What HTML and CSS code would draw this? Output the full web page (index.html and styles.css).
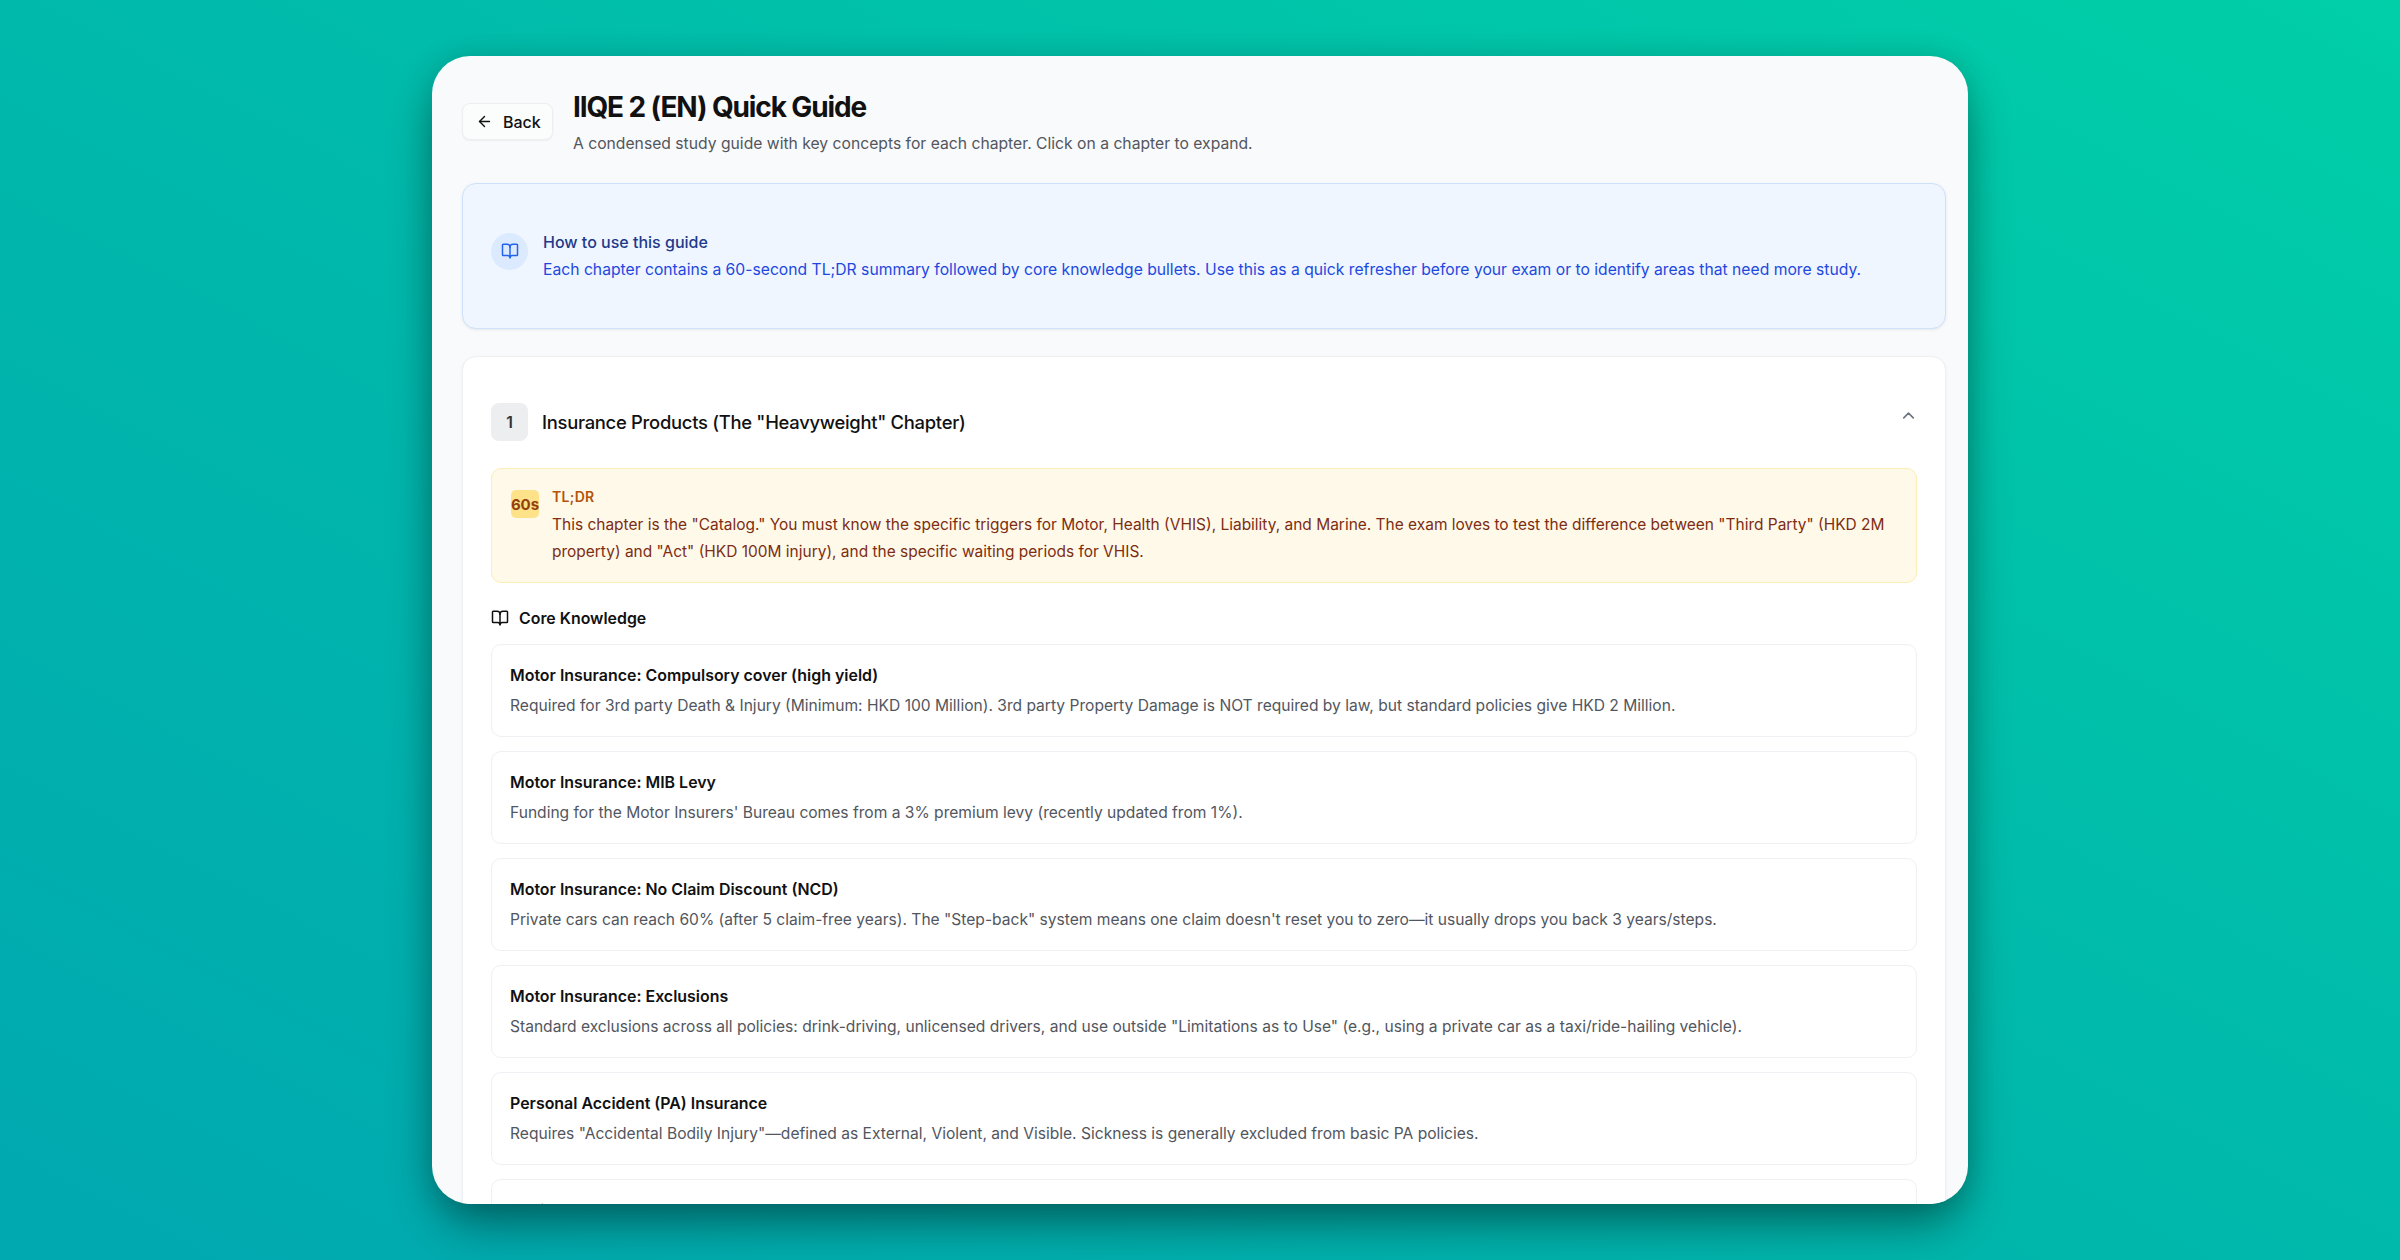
FILE: index.html
```html
<!DOCTYPE html>
<html lang="en">
<head>
<meta charset="utf-8">
<title>IIQE 2 (EN) Quick Guide</title>
<link rel="stylesheet" href="styles.css">
</head>
<body>
<main class="panel">
  <header class="head">
    <button class="back">
      <svg class="ico-back" viewBox="0 0 24 24"><path d="m12 19-7-7 7-7"/><path d="M19 12H5"/></svg>
      <span>Back</span>
    </button>
    <div class="head-text">
      <h1>IIQE 2 (EN) Quick Guide</h1>
      <p>A condensed study guide with key concepts for each chapter. Click on a chapter to expand.</p>
    </div>
  </header>

  <section class="howto">
    <div class="howto-ico">
      <svg viewBox="0 0 24 24"><path d="M12 7v14"/><path d="M3 18a1 1 0 0 1-1-1V4a1 1 0 0 1 1-1h5a4 4 0 0 1 4 4 4 4 0 0 1 4-4h5a1 1 0 0 1 1 1v13a1 1 0 0 1-1 1h-6a3 3 0 0 0-3 3 3 3 0 0 0-3-3z"/></svg>
    </div>
    <div class="howto-text">
      <h2>How to use this guide</h2>
      <p>Each chapter contains a 60-second TL;DR summary followed by core knowledge bullets. Use this as a quick refresher before your exam or to identify areas that need more study.</p>
    </div>
  </section>

  <section class="card">
    <div class="chapter">
      <div class="chapter-left">
        <span class="num">1</span>
        <h3>Insurance Products (The "Heavyweight" Chapter)</h3>
      </div>
      <svg class="chev" viewBox="0 0 24 24"><path d="m18 15-6-6-6 6"/></svg>
    </div>

    <div class="tldr">
      <span class="badge">60s</span>
      <div>
        <div class="tldr-label">TL;DR</div>
        <p>This chapter is the "Catalog." You must know the specific triggers for Motor, Health (VHIS), Liability, and Marine. The exam loves to test the difference between "Third Party" (HKD 2M property) and "Act" (HKD 100M injury), and the specific waiting periods for VHIS.</p>
      </div>
    </div>

    <div class="core">
      <svg viewBox="0 0 24 24"><path d="M12 7v14"/><path d="M3 18a1 1 0 0 1-1-1V4a1 1 0 0 1 1-1h5a4 4 0 0 1 4 4 4 4 0 0 1 4-4h5a1 1 0 0 1 1 1v13a1 1 0 0 1-1 1h-6a3 3 0 0 0-3 3 3 3 0 0 0-3-3z"/></svg>
      <span>Core Knowledge</span>
    </div>

    <ul class="items">
      <li><h4>Motor Insurance: Compulsory cover (high yield)</h4><p>Required for 3rd party Death &amp; Injury (Minimum: HKD 100 Million). 3rd party Property Damage is NOT required by law, but standard policies give HKD 2 Million.</p></li>
      <li><h4>Motor Insurance: MIB Levy</h4><p>Funding for the Motor Insurers' Bureau comes from a 3% premium levy (recently updated from 1%).</p></li>
      <li><h4>Motor Insurance: No Claim Discount (NCD)</h4><p>Private cars can reach 60% (after 5 claim-free years). The "Step-back" system means one claim doesn't reset you to zero—it usually drops you back 3 years/steps.</p></li>
      <li><h4>Motor Insurance: Exclusions</h4><p>Standard exclusions across all policies: drink-driving, unlicensed drivers, and use outside "Limitations as to Use" (e.g., using a private car as a taxi/ride-hailing vehicle).</p></li>
      <li><h4>Personal Accident (PA) Insurance</h4><p>Requires "Accidental Bodily Injury"—defined as External, Violent, and Visible. Sickness is generally excluded from basic PA policies.</p></li>
      <li><h4>Marine Insurance: Hull &amp; Cargo</h4></li>
    </ul>
  </section>
</main>
</body>
</html>
```

FILE: styles.css
```css
* { box-sizing: border-box; }
html, body { margin: 0; height: 100%; }
body {
  height: 1260px;
  overflow: hidden;
  display: flex;
  align-items: center;
  justify-content: center;
  background: linear-gradient(to top right, #00a8b0 0%, #00b9ab 50%, #00cfa8 100%);
  font-family: Inter, "Liberation Sans", sans-serif;
}
svg { fill: none; stroke: currentColor; stroke-width: 2; stroke-linecap: round; stroke-linejoin: round; flex: none; }
h1, h2, h3, h4, p, ul { margin: 0; padding: 0; }
.panel {
  width: 1536px;
  height: 1148px;
  overflow: hidden;
  border-radius: 38px;
  background: #f9fafb;
  padding: 31px 22px 0 30px;
  box-shadow: 0 25px 50px -8px rgba(0, 0, 0, .45), 0 0 30px rgba(0, 0, 0, .12);
}
.head { display: flex; align-items: center; gap: 20px; }
.back {
  display: flex;
  align-items: center;
  gap: 10px;
  width: 91px;
  height: 37px;
  padding: 0 13px;
  background: #fbfcfc;
  border: 1px solid #eceef1;
  border-radius: 8px;
  box-shadow: 0 1px 2px rgba(0, 0, 0, .05);
  color: #111;
  font: 500 16px Inter, sans-serif;
}
.ico-back { width: 17px; height: 17px; }
.head h1 { font-size: 28px; line-height: 40px; font-weight: 700; letter-spacing: -1.13px; color: #111; }
.head p { font-size: 15.7px; line-height: 24px; color: #52565e; margin-top: 5px; }
.howto {
  display: flex;
  align-items: center;
  gap: 15px;
  height: 146px;
  margin-top: 27px;
  padding: 0 28px;
  background: #eff6ff;
  border: 1px solid #cfe1fb;
  border-radius: 14px;
  box-shadow: 0 1px 3px rgba(0, 0, 0, .08);
}
.howto-ico { width: 37px; height: 37px; margin-top: -10px; border-radius: 50%; background: #dbeafe; color: #2563eb; display: flex; align-items: center; justify-content: center; }
.howto-ico svg { width: 18px; height: 18px; }
.howto h2 { font-size: 16px; line-height: 21px; font-weight: 500; color: #1e3a8a; }
.howto p { font-size: 15.7px; line-height: 21px; color: #1d48e0; margin-top: 6px; }
.card {
  margin-top: 27px;
  padding: 0 28px 30px;
  background: #fff;
  border: 1px solid #eef0f3;
  border-radius: 14px;
  box-shadow: 0 1px 3px rgba(0, 0, 0, .06);
}
.chapter { display: flex; align-items: flex-start; justify-content: space-between; padding-top: 46px; height: 111px; }
.chapter-left { display: flex; align-items: center; gap: 14px; }
.num { width: 37px; height: 38px; border-radius: 8px; background: #eceef0; display: flex; align-items: center; justify-content: center; font-size: 15.7px; font-weight: 600; color: #333; }
.chapter h3 { font-size: 18.4px; line-height: 28px; font-weight: 500; letter-spacing: -.28px; color: #111; }
.chev { width: 19px; height: 19px; color: #6b7280; margin-top: 3px; margin-right: -1px; }
.tldr {
  display: flex;
  gap: 13px;
  height: 115px;
  padding: 21px 19px 0 19px;
  background: #fff9ea;
  border: 1px solid #fdeeb5;
  border-radius: 10px;
}
.badge { flex: none; width: 28px; height: 28px; border-radius: 5px; background: #fee28a; display: flex; align-items: center; justify-content: center; font-size: 15px; font-weight: 700; color: #92400e; white-space: nowrap; }
.tldr-label { font-size: 14px; line-height: 18px; font-weight: 600; color: #b45309; letter-spacing: .3px; margin-top: -2px; }
.tldr p { font-size: 15.48px; line-height: 26.6px; color: #7c2d12; margin-top: 6px; }
.core { display: flex; align-items: center; gap: 10px; margin-top: 25px; height: 20px; font-size: 15.9px; font-weight: 600; color: #111; }
.core svg { width: 18px; height: 18px; }
.items { list-style: none; margin-top: 16px; display: flex; flex-direction: column; gap: 14px; }
.items li {
  height: 93px;
  padding: 20px 18px 0;
  background: #fff;
  border: 1px solid #eef0f3;
  border-radius: 10px;
}
.items h4 { font-size: 15.95px; line-height: 21px; font-weight: 600; color: #111; }
.items p { font-size: 15.58px; line-height: 21px; color: #52565e; margin-top: 9px; }
```
